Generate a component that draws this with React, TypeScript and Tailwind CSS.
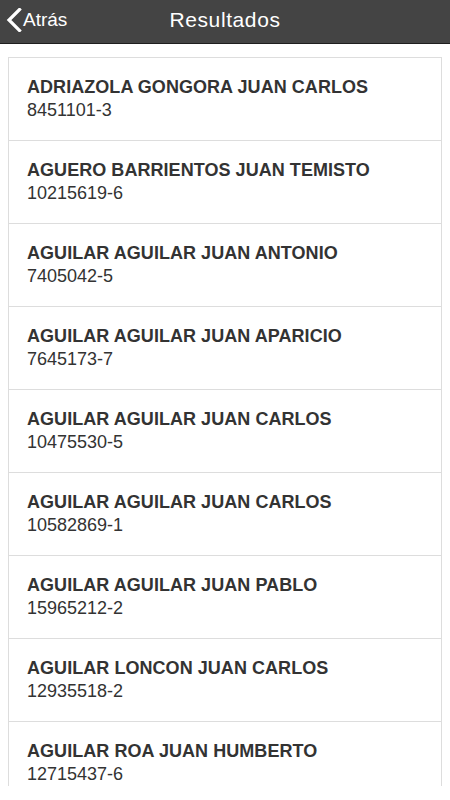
const rows = [
  { name: "ADRIAZOLA GONGORA JUAN CARLOS", rut: "8451101-3" },
  { name: "AGUERO BARRIENTOS JUAN TEMISTO", rut: "10215619-6" },
  { name: "AGUILAR AGUILAR JUAN ANTONIO", rut: "7405042-5" },
  { name: "AGUILAR AGUILAR JUAN APARICIO", rut: "7645173-7" },
  { name: "AGUILAR AGUILAR JUAN CARLOS", rut: "10475530-5" },
  { name: "AGUILAR AGUILAR JUAN CARLOS", rut: "10582869-1" },
  { name: "AGUILAR AGUILAR JUAN PABLO", rut: "15965212-2" },
  { name: "AGUILAR LONCON JUAN CARLOS", rut: "12935518-2" },
  { name: "AGUILAR ROA JUAN HUMBERTO", rut: "12715437-6" },
];

export default function App() {
  return (
    <div className="flex h-[800px] w-[450px] flex-col overflow-hidden bg-white font-['Liberation_Sans',Arial,sans-serif]">
      {/* barra superior */}
      <header className="relative flex h-[44px] shrink-0 items-center border-b border-[#1e1e1e] bg-[#444444] pb-[3px]">
        <button className="z-10 flex items-center pl-[5px] text-[19px] text-white">
          <svg width="17" height="24" viewBox="0 0 17 24" className="mr-[1px]">
            <polyline points="14.5,1.5 4,12 14.5,22.5" fill="none" stroke="white" strokeWidth="3.2" strokeLinecap="square" />
          </svg>
          Atrás
        </button>
        <h1 className="absolute inset-x-0 text-center text-[21px] tracking-[0.6px] text-white">Resultados</h1>
      </header>

      <div className="h-[742px] shrink-0 overflow-hidden">
        <ul className="mx-2 mt-[13px] border border-[#dddddd] bg-white">
          {rows.map((r, i) => (
            <li key={i} className="border-b border-[#dddddd] px-[18px] py-[18px] text-[#333333] last:border-b-0">
              <div className="text-[18px] leading-[23px] font-bold tracking-[0.05px]">{r.name}</div>
              <div className="text-[18px] leading-[23px]">{r.rut}</div>
            </li>
          ))}
        </ul>
      </div>
    </div>
  );
}
